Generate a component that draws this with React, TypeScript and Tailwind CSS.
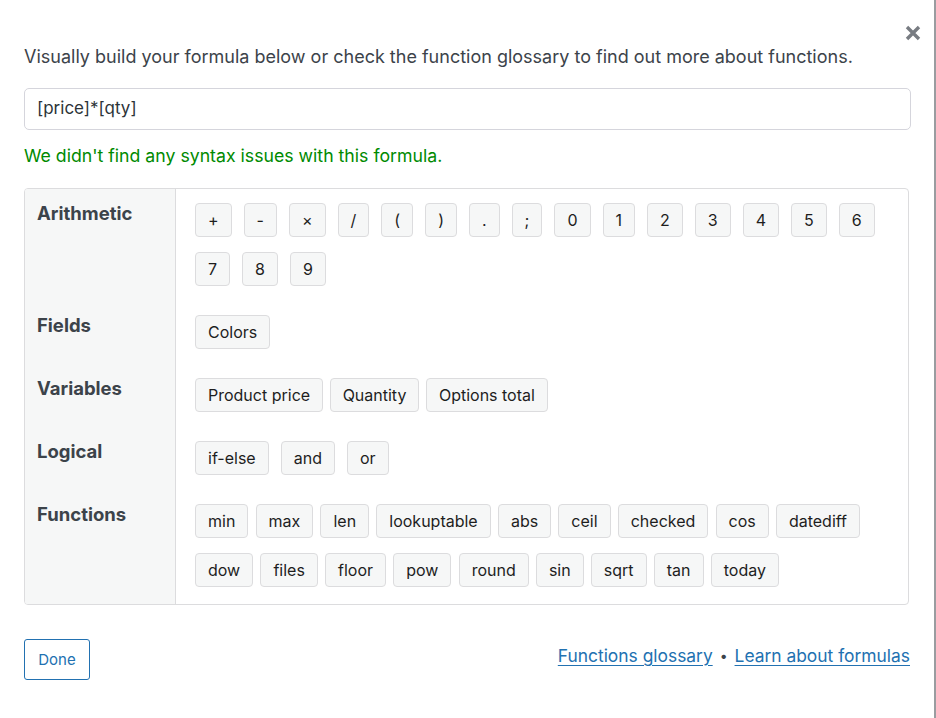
import React from "react";

const font = { fontFamily: "Inter, 'Noto Sans', sans-serif" };

function Btn({ children }: { children: React.ReactNode }) {
  return (
    <button className="h-[34px] px-3 rounded-[4px] border border-[#dcdcde] bg-[#f6f7f7] text-[16px] leading-none text-[#1e1e1e]">
      {children}
    </button>
  );
}

function Row({ label, items, gap, last }: { label: string; items: string[]; gap: string; last?: boolean }) {
  return (
    <div className="flex">
      <div className="w-[151px] shrink-0 bg-[#f6f7f7] border-r border-[#dcdcde] pl-[12px] pt-[11px] text-[18.5px] font-bold text-[#3c434a]">
        {label}
      </div>
      <div className={`flex-1 flex flex-wrap content-start gap-y-[15px] pl-[19px] pr-[19px] pt-[14px] ${gap} ${last ? "pb-[17px]" : "pb-[15px]"}`}>
        {items.map((t) => (
          <Btn key={t}>{t}</Btn>
        ))}
      </div>
    </div>
  );
}

export default function App() {
  return (
    <div className="w-[936px] h-[718px] bg-white relative border-r-2 border-[#9a9ca0]" style={font}>
      <button className="absolute left-[905px] top-[25px] w-[16px] h-[16px]">
        <svg viewBox="0 0 16 16" width="16" height="16">
          <path d="M2 2 L14 14 M14 2 L2 14" stroke="#787c82" strokeWidth="3.4" strokeLinecap="butt" />
        </svg>
      </button>
      <div className="pl-[24px] pr-[24px] pt-[44px]">
        <p className="text-[18px] leading-[24px] text-[#3c434a] translate-y-[1px]">
          Visually build your formula below or check the function glossary to find out more about functions.
        </p>
        <div className="mt-[20px] w-[887px] h-[42px] border border-[#d5d5dc] rounded-[5px] flex items-center pl-[12px] text-[17px] text-[#2c3338]">
          [price]*[qty]
        </div>
        <p className="mt-[14px] text-[17.7px] leading-[24px] text-[#008a00]">
          We didn't find any syntax issues with this formula.
        </p>
        <div className="mt-[20px] w-[885px] border border-[#dcdcde] rounded-[4px] overflow-hidden">
          <Row
            label="Arithmetic"
            gap="gap-x-[12px]"
            items={["+", "-", "×", "/", "(", ")", ".", ";", "0", "1", "2", "3", "4", "5", "6", "7", "8", "9"]}
          />
          <Row label="Fields" gap="gap-x-[12px]" items={["Colors"]} />
          <Row label="Variables" gap="gap-x-[6.5px]" items={["Product price", "Quantity", "Options total"]} />
          <Row label="Logical" gap="gap-x-[12px]" items={["if-else", "and", "or"]} />
          <Row
            label="Functions"
            gap="gap-x-[7.2px]"
            last
            items={["min", "max", "len", "lookuptable", "abs", "ceil", "checked", "cos", "datediff", "dow", "files", "floor", "pow", "round", "sin", "sqrt", "tan", "today"]}
          />
        </div>
        <div className="mt-[34px] flex items-start justify-between w-[886px]">
          <button className="w-[66px] h-[41px] pt-[2px] border border-[#2271b1] rounded-[3px] text-[15px] text-[#2271b1] bg-white">
            Done
          </button>
          <div className="mt-[5px] text-[17.4px] leading-[24px] text-[#2271b1] flex items-center gap-[7px]">
            <span className="underline underline-offset-[3px]">Functions glossary</span>
            <span className="text-[#3c434a] text-[14px]">•</span>
            <span className="underline underline-offset-[3px]">Learn about formulas</span>
          </div>
        </div>
      </div>
    </div>
  );
}
